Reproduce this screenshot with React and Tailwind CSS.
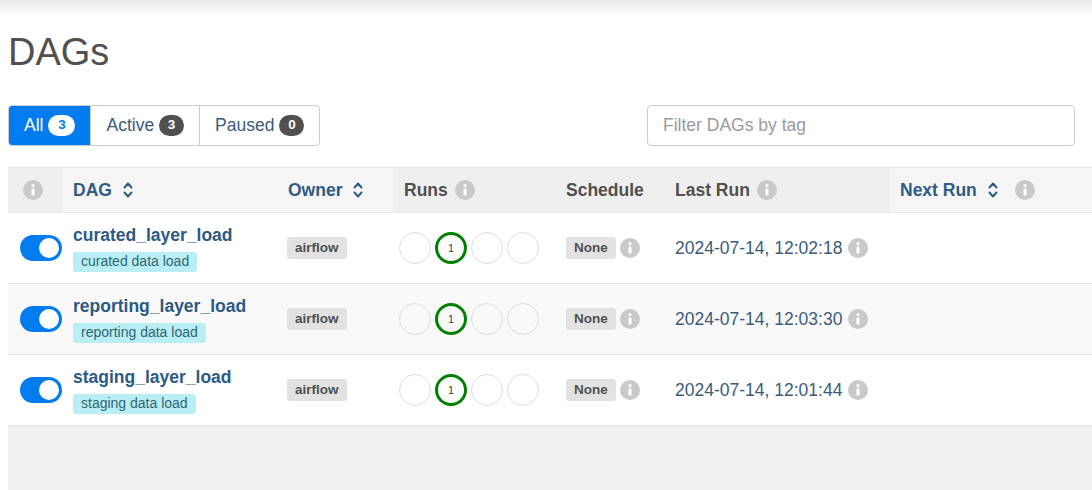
import React from "react";

const dags = [
  { id: "curated_layer_load", tag: "curated data load", last: "2024-07-14, 12:02:18" },
  { id: "reporting_layer_load", tag: "reporting data load", last: "2024-07-14, 12:03:30" },
  { id: "staging_layer_load", tag: "staging data load", last: "2024-07-14, 12:01:44" },
];

function InfoIcon() {
  return (
    <svg width="20" height="20" viewBox="0 0 20 20" className="shrink-0">
      <circle cx="10" cy="10" r="10" fill="#c9c9c9" />
      <circle cx="10" cy="5.6" r="1.6" fill="#fff" />
      <rect x="8.5" y="8.4" width="3" height="7" rx="0.6" fill="#fff" />
    </svg>
  );
}

function SortIcon() {
  return (
    <svg width="10" height="20" viewBox="0 0 10 20" className="shrink-0">
      <path d="M1.5 7.5 L5 3.5 L8.5 7.5" fill="none" stroke="#2f5b84" strokeWidth="2" strokeLinecap="round" strokeLinejoin="round" />
      <path d="M1.5 12.5 L5 16.5 L8.5 12.5" fill="none" stroke="#2f5b84" strokeWidth="2" strokeLinecap="round" strokeLinejoin="round" />
    </svg>
  );
}

function Toggle() {
  return (
    <div className="w-[43px] h-[26px] rounded-full bg-[#017cee] flex items-center justify-end pr-[3px]">
      <div className="w-[20px] h-[20px] rounded-full bg-white" />
    </div>
  );
}

function Badge({ children }) {
  return (
    <span className="inline-flex items-center h-[22px] px-[8px] rounded-[3px] bg-[#e2e2e2] text-[#51504f] text-[13.5px] font-bold">
      {children}
    </span>
  );
}

function Row({ dag, striped }) {
  return (
    <div className={`flex h-[71px] border-b border-[#e6e6e6] ${striped ? "bg-[#f9f9f9]" : "bg-white"}`}>
      <div className="w-[54px] shrink-0 pl-[12px] flex items-center">
        <Toggle />
      </div>
      <div className="w-[215px] shrink-0 pl-[11px] flex flex-col justify-center items-start">
        <span className="text-[17.5px] leading-[20px] font-bold text-[#2c5a85]">{dag.id}</span>
        <span className="mt-[7px] h-[20px] flex items-center px-[8px] rounded-[3px] bg-[#b9eef4] text-[#2f6673] text-[14px]">
          {dag.tag}
        </span>
      </div>
      <div className="w-[116px] shrink-0 pl-[10px] flex items-center">
        <Badge>airflow</Badge>
      </div>
      <div className="w-[162px] shrink-0 pl-[6px] flex items-center gap-[4px]">
        <div className="w-8 h-8 rounded-full border-[1.5px] border-[#dedede]" />
        <div className="w-8 h-8 rounded-full border-[3px] border-[#008000] flex items-center justify-center text-[10px] text-[#333]">
          1
        </div>
        <div className="w-8 h-8 rounded-full border-[1.5px] border-[#dedede]" />
        <div className="w-8 h-8 rounded-full border-[1.5px] border-[#dedede]" />
      </div>
      <div className="w-[110px] shrink-0 pl-[11px] flex items-center gap-[4px]">
        <Badge>None</Badge>
        <InfoIcon />
      </div>
      <div className="w-[225px] shrink-0 pl-[10px] flex items-center gap-[6px]">
        <span className="text-[17.5px] text-[#3b5b7a]">{dag.last}</span>
        <InfoIcon />
      </div>
      <div className="flex-1" />
    </div>
  );
}

export default function App() {
  return (
    <div className="w-[1092px] h-[490px] overflow-hidden bg-white font-['Liberation_Sans',Arial,sans-serif]">
      <div className="h-[16px] bg-gradient-to-b from-[#e8e8e8] to-white" />
      <div className="pl-2">
        <h1 className="mt-[17px] text-[38px] leading-none font-normal text-[#51504f]">DAGs</h1>

        <div className="mt-[34px] flex items-center justify-between pr-[17px]">
          <div className="flex h-[41px] rounded-[4px] border border-[#cccccc] overflow-hidden text-[17.5px]">
            <div className="flex items-center gap-[5px] px-[15px] bg-[#017cee] text-white">
              All
              <span className="h-[21px] min-w-[27px] px-[7px] rounded-full bg-white text-[#017cee] text-[13.5px] font-bold flex items-center justify-center">3</span>
            </div>
            <div className="flex items-center gap-[5px] px-[15px] border-l border-[#cccccc] text-[#3b5b7a]">
              Active
              <span className="h-[21px] min-w-[25px] px-[7px] rounded-full bg-[#51504f] text-white text-[13.5px] font-bold flex items-center justify-center">3</span>
            </div>
            <div className="flex items-center gap-[5px] px-[15px] border-l border-[#cccccc] text-[#3b5b7a]">
              Paused
              <span className="h-[21px] min-w-[25px] px-[7px] rounded-full bg-[#51504f] text-white text-[13.5px] font-bold flex items-center justify-center">0</span>
            </div>
          </div>
          <div className="w-[428px] h-[41px] rounded-[4px] border border-[#cccccc] flex items-center px-[15px] text-[17.5px] text-[#9b9b9b]">
            Filter DAGs by tag
          </div>
        </div>

        <div className="mt-[21px] w-[1100px]">
          <div className="flex h-[46px] border-t border-b border-[#e6e6e6] text-[17.5px] font-bold">
            <div className="w-[54px] shrink-0 bg-[#efefef] pl-[15px] flex items-center">
              <InfoIcon />
            </div>
            <div className="w-[215px] shrink-0 bg-[#f5f5f5] pl-[11px] flex items-center gap-[11px] text-[#2f5b84]">
              DAG <SortIcon />
            </div>
            <div className="w-[116px] shrink-0 bg-[#f5f5f5] pl-[11px] flex items-center gap-[11px] text-[#2f5b84]">
              Owner <SortIcon />
            </div>
            <div className="w-[162px] shrink-0 bg-[#efefef] pl-[11px] flex items-center gap-[7px] text-[#51504f]">
              Runs <InfoIcon />
            </div>
            <div className="w-[110px] shrink-0 bg-[#efefef] pl-[11px] flex items-center text-[#51504f]">
              Schedule
            </div>
            <div className="w-[225px] shrink-0 bg-[#efefef] pl-[10px] flex items-center gap-[7px] text-[#51504f]">
              Last Run <InfoIcon />
            </div>
            <div className="flex-1 bg-[#f5f5f5] pl-[10px] flex items-center text-[#2f5b84]">
              Next Run
              <span className="ml-[11px]"><SortIcon /></span>
              <span className="ml-[17px]"><InfoIcon /></span>
            </div>
          </div>
          {dags.map((d, i) => (
            <Row key={d.id} dag={d} striped={i === 1} />
          ))}
          <div className="h-[70px] bg-[#f0f0f0]" />
        </div>
      </div>
    </div>
  );
}
